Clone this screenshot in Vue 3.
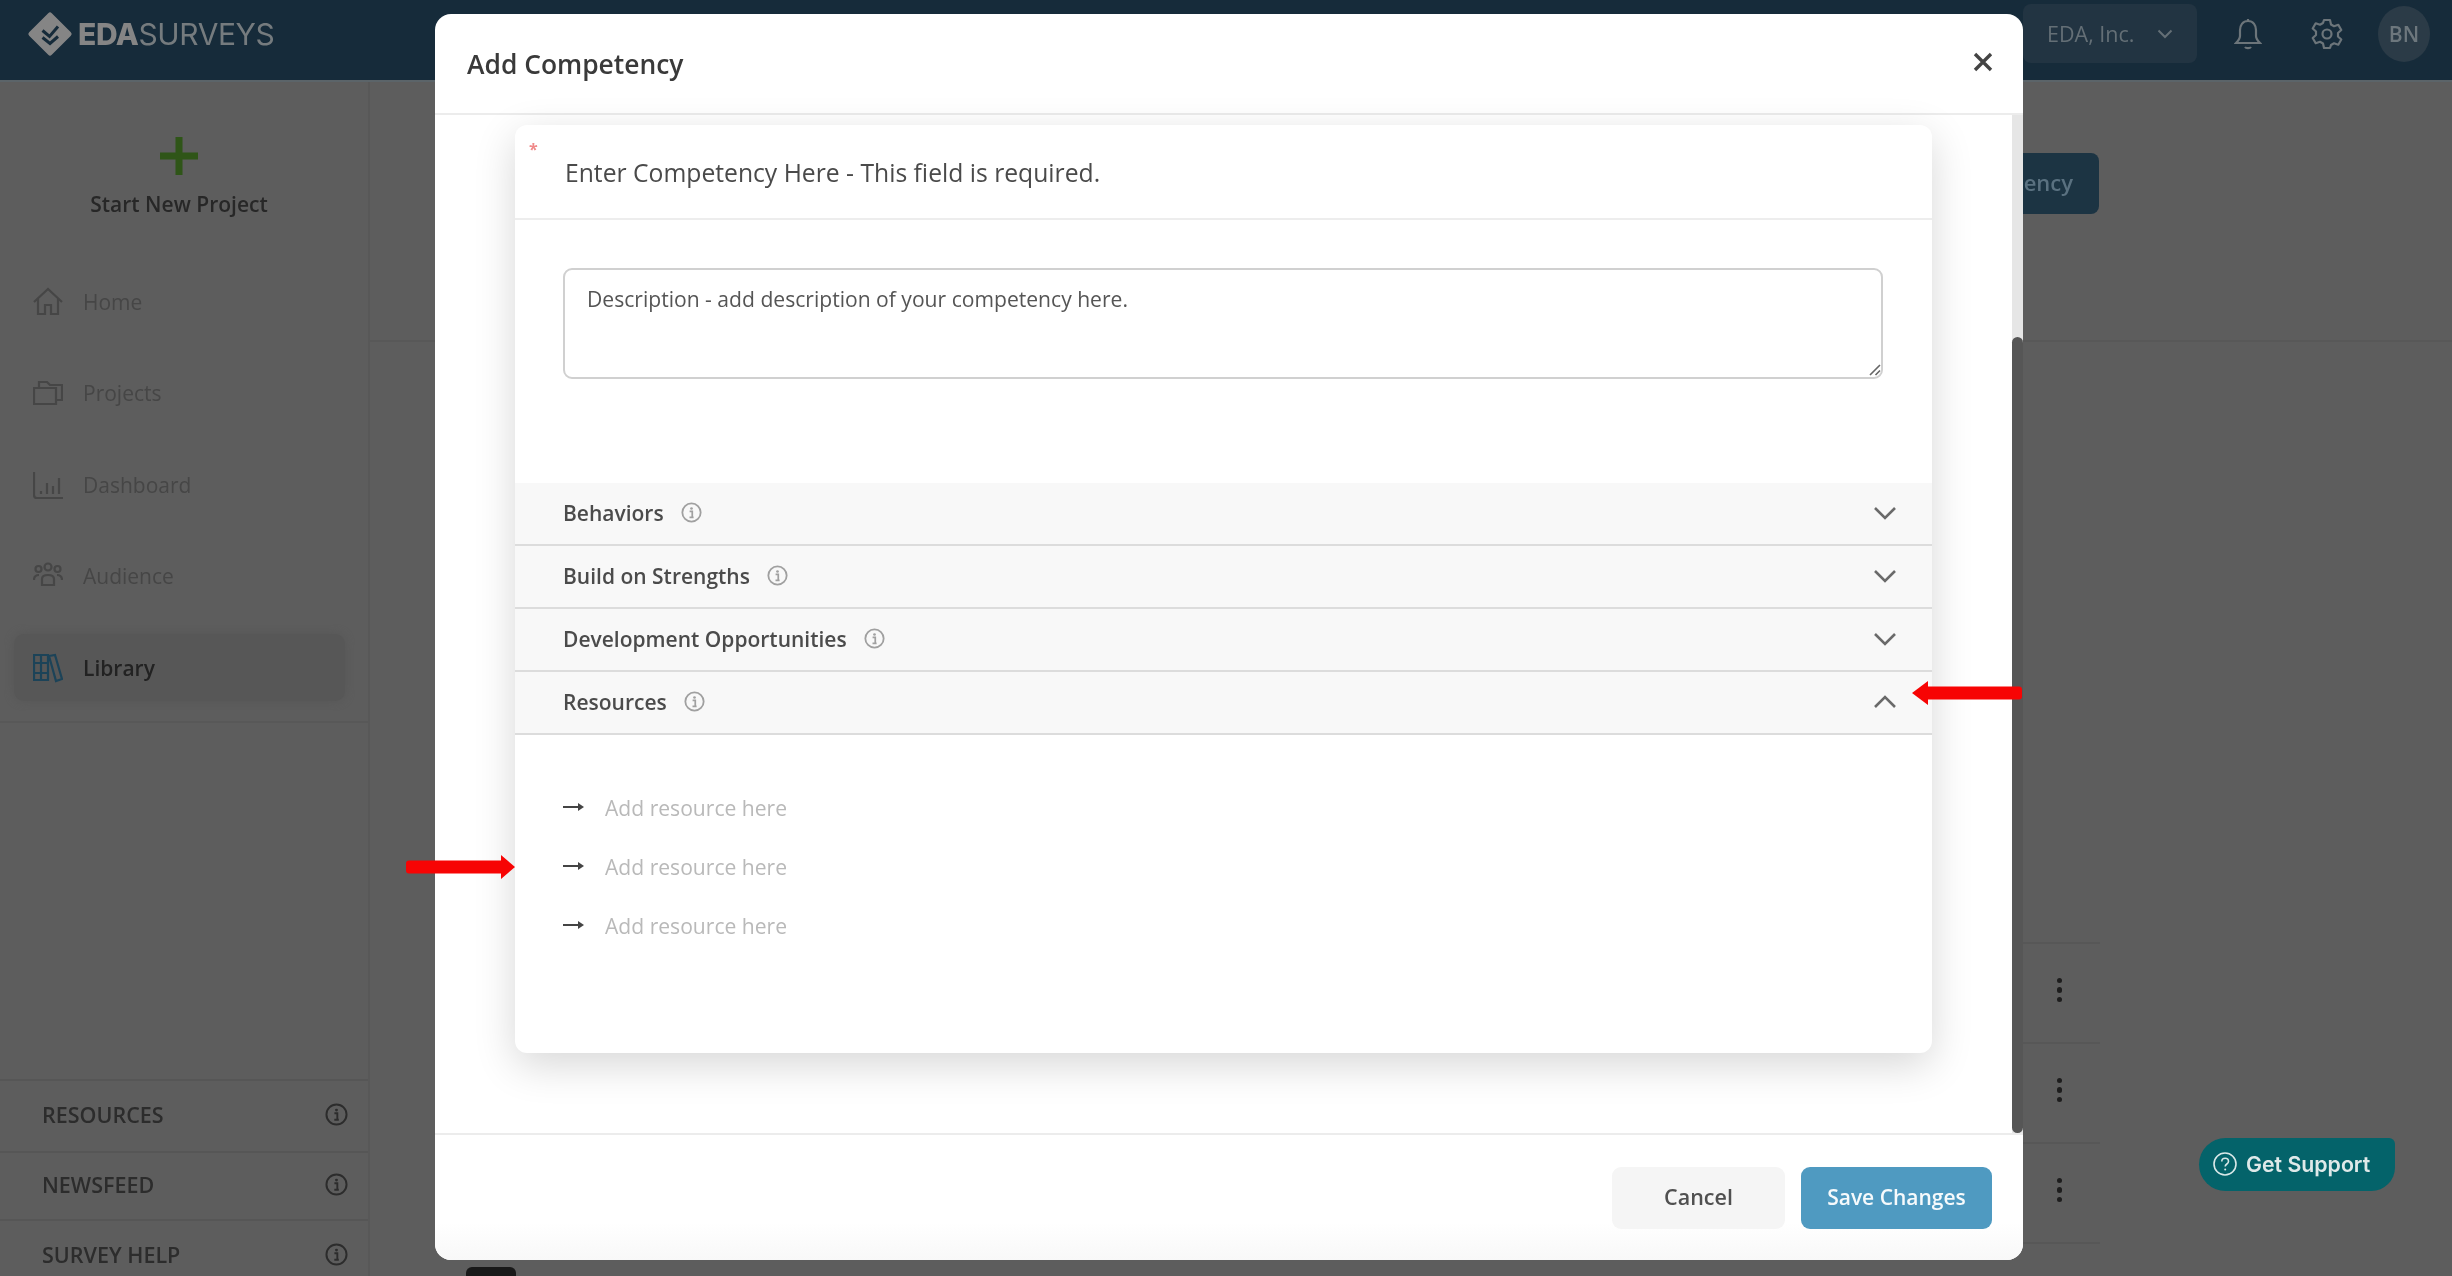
<script setup>
const navItems = [
  { label: 'Home', icon: 'home' },
  { label: 'Projects', icon: 'folder' },
  { label: 'Dashboard', icon: 'chart' },
  { label: 'Audience', icon: 'people' },
  { label: 'Library', icon: 'books', active: true },
]
const helpers = ['RESOURCES', 'NEWSFEED', 'SURVEY HELP']
const sections = [
  { label: 'Behaviors', open: false },
  { label: 'Build on Strengths', open: false },
  { label: 'Development Opportunities', open: false },
  { label: 'Resources', open: true },
]
const resources = [1, 2, 3]
const tableRows = [1, 2, 3]
</script>

<template>
  <div class="screen">
    <svg class="defs" width="0" height="0" aria-hidden="true">
      <symbol id="info" viewBox="0 0 22 22">
        <circle cx="11" cy="11" r="9.6" fill="none" stroke="currentColor" stroke-width="1.9" />
        <circle cx="11" cy="6.8" r="1.4" fill="currentColor" />
        <path d="M9 9.8h2.8v6M8.9 16h4.3" fill="none" stroke="currentColor" stroke-width="1.8" />
      </symbol>
    </svg>

    <header class="topbar">
      <div class="brand">
        <svg class="brand-mark" viewBox="0 0 46 46">
          <rect x="7" y="7" width="32" height="32" rx="2.5" transform="rotate(45 23 23)" fill="#858585" />
          <path d="M15.5 19.5l7 6 8.5-10M15.500 26.500l7.500 6 8-7" fill="none" stroke="#162b3a" stroke-width="3" />
        </svg>
        <span class="brand-name"><b>EDA</b>SURVEYS</span>
      </div>
      <div class="top-tools">
        <div class="org">
          <span>EDA, Inc.</span>
          <svg width="16" height="10" viewBox="0 0 16 10"><path d="M1.5 1.5L8 8l6.5-6.5" fill="none" stroke="#646f76" stroke-width="2" /></svg>
        </div>
        <svg class="tool bell" viewBox="0 0 28 32">
          <path d="M14 3c-5.500 0-8 4.500-8 9v6c0 3-2 5-4 7h24c-2-2-4-4-4-7v-6c0-4.500-2.500-9-8-9zM14 1v2M11 29c1 1.500 5 1.500 6 0" fill="none" stroke="#6c757a" stroke-width="2.200" />
        </svg>
        <svg class="tool gear" viewBox="0 0 32 32">
          <path d="M13 2h6l1 4.500 3 1.700 4.300-1.400 3 5.200-3.300 3 0 3.500 3.300 3-3 5.200-4.300-1.400-3 1.700L19 30h-6l-1-4.500-3-1.700-4.300 1.400-3-5.200 3.300-3 0-3.500-3.300-3 3-5.200 4.300 1.400 3-1.700z" fill="none" stroke="#6c757a" stroke-width="2.200" stroke-linejoin="round" />
          <circle cx="16" cy="16" r="4.500" fill="none" stroke="#6c757a" stroke-width="2.200" />
        </svg>
        <div class="avatar">BN</div>
      </div>
    </header>

    <div class="shell">
      <aside class="sidebar">
        <div class="new-project">
          <svg class="plus" viewBox="0 0 38 38"><path d="M19 0v38M0 19h38" stroke="#2f5518" stroke-width="7" /></svg>
          <span>Start New Project</span>
        </div>
        <nav class="nav">
          <a v-for="item in navItems" :key="item.label" class="nav-item" :class="{ active: item.active }">
            <svg class="nav-icon" viewBox="0 0 30 30">
              <g v-if="item.icon === 'home'" fill="none" stroke="#464646" stroke-width="2.200">
                <path d="M1 15L15 2l14 13M5 12v15h7v-9h6v9h7V12" />
              </g>
              <g v-else-if="item.icon === 'folder'" fill="none" stroke="#464646" stroke-width="2.200">
                <path d="M6 9V4h8l3 3h12v15H24M1 10h22v16H1z" />
              </g>
              <g v-else-if="item.icon === 'chart'" fill="none" stroke="#464646" stroke-width="2.200">
                <path d="M1 2v23c0 2 1 3 3 3h26M8 21v3M14 13v11M20 16v8M26 8v16" />
              </g>
              <g v-else-if="item.icon === 'people'" fill="none" stroke="#464646" stroke-width="2.200">
                <circle cx="5.500" cy="8" r="3" /><circle cx="15" cy="6" r="3.500" /><circle cx="24.500" cy="8" r="3" />
                <path d="M1 19c0-4 2-5 5-5M29 19c0-4-2-5-5-5M9 24v-6c0-3 3-4 6-4s6 1 6 4v6z" />
              </g>
              <g v-else fill="none" stroke="#1c4358" stroke-width="2.200">
                <path d="M1 2h7v25H1zM8 2h7v25H8zM1 10h14M1 20h14M16 3l6-1 7 24-6 2z" />
              </g>
            </svg>
            <span>{{ item.label }}</span>
          </a>
        </nav>
        <div class="helpers">
          <div v-for="name in helpers" :key="name" class="helper">
            <span>{{ name }}</span>
            <svg class="helper-info"><use href="#info" /></svg>
          </div>
        </div>
      </aside>

      <main class="content">
        <div class="content-head">
          <button class="add-btn">Add Competency</button>
        </div>
        <div class="table">
          <div v-for="row in tableRows" :key="row" class="table-row">
            <span class="dots"><i></i><i></i><i></i></span>
          </div>
        </div>
      </main>
    </div>

    <div class="help-chip">
      <svg class="chip-icon" viewBox="0 0 24 24">
        <circle cx="12" cy="12" r="11" fill="none" stroke="#d9e8e8" stroke-width="1.600" />
        <path d="M8.800 9.500c0-4.300 6.700-4.300 6.700 0 0 2.500-3.300 2.500-3.300 5" fill="none" stroke="#d9e8e8" stroke-width="1.600" />
        <circle cx="12.200" cy="17.500" r="1" fill="#d9e8e8" />
      </svg>
      <span>Get Support</span>
    </div>

    <div class="stub"></div>

    <section class="modal">
      <div class="modal-head">
        <h2>Add Competency</h2>
        <svg class="close" viewBox="0 0 20 20"><path d="M2 2l16 16M18 2L2 18" stroke="#444" stroke-width="3.400" /></svg>
      </div>
      <div class="modal-body">
        <div class="card">
          <div class="title-row">
            <span class="star">*</span>
            <span>Enter Competency Here - This field is required.</span>
          </div>
          <div class="desc">
            <textarea placeholder="Description - add description of your competency here."></textarea>
            <svg class="grip" viewBox="0 0 12 12"><path d="M1 11L11 1M6.500 11L11 6.500" stroke="#666" stroke-width="1.600" /></svg>
          </div>
          <div class="accordion">
            <div v-for="s in sections" :key="s.label" class="acc-row">
              <span class="acc-label">{{ s.label }}</span>
              <svg class="acc-info"><use href="#info" /></svg>
              <svg class="chev" :class="{ up: s.open }" viewBox="0 0 24 14"><path d="M2 2l10 10L22 2" fill="none" stroke="#6a6a6a" stroke-width="2.600" /></svg>
            </div>
          </div>
          <ul class="res-list">
            <li v-for="r in resources" :key="r">
              <svg class="res-arrow" viewBox="0 0 21 10"><path d="M0 5h17" stroke="#444" stroke-width="2" /><path d="M15 1l6 4-6 4z" fill="#444" /></svg>
              <span>Add resource here</span>
            </li>
          </ul>
        </div>
      </div>
      <div class="modal-foot">
        <button class="btn cancel">Cancel</button>
        <button class="btn save">Save Changes</button>
      </div>
      <div class="track"><div class="thumb"></div></div>
    </section>

    <svg class="mark mark-left" viewBox="0 0 109 24"><path d="M3 5.500h92V0l14 12-14 12v-5.500H3a3 3 0 0 1-3-3v-7a3 3 0 0 1 3-3z" fill="#f70404" /></svg>
    <svg class="mark mark-right" viewBox="0 0 110 24"><path d="M107 5.500H16V0L0 12l16 12v-5.500h91a3 3 0 0 0 3-3v-7a3 3 0 0 0-3-3z" fill="#f70404" /></svg>
  </div>
</template>

<style scoped>
.screen {
  position: relative;
  width: 2452px;
  height: 1276px;
  overflow: hidden;
  background: #5d5d5d;
  font-family: "Open Sans", "Noto Sans", sans-serif;
  filter: blur(0.7px);
}
.defs { position: absolute; }

.topbar {
  height: 82px;
  box-sizing: border-box;
  background: #162b3a;
  border-bottom: 2px solid #5b6469;
  display: flex;
  align-items: flex-start;
  justify-content: space-between;
}
.brand { display: flex; align-items: center; padding: 11px 0 0 27px; gap: 5px; }
.brand-mark { width: 46px; height: 46px; }
.brand-name {
  font-family: Inter, sans-serif;
  font-size: 30px;
  letter-spacing: -0.4px;
  color: #757b7e;
  font-weight: 400;
}
.brand-name b { color: #858585; font-weight: 800; }

.top-tools { display: flex; align-items: center; padding-top: 4px; }
.org {
  width: 174px;
  height: 59px;
  box-sizing: border-box;
  background: #223442;
  border-radius: 8px;
  display: flex;
  align-items: center;
  padding-left: 24px;
  gap: 23px;
  color: #646f76;
  font-size: 21.500px;
  margin-right: 37px;
}
.tool { display: block; }
.bell { width: 28px; height: 32px; margin-right: 49px; }
.gear { width: 32px; height: 32px; margin-right: 35px; }
.avatar {
  width: 52px;
  height: 56px;
  border-radius: 50%;
  background: #2b3b47;
  color: #6d777d;
  font-size: 21px;
  font-weight: 600;
  display: flex;
  align-items: center;
  justify-content: center;
  margin-right: 22px;
}

.shell { display: flex; height: 1194px; }
.sidebar {
  width: 370px;
  flex: none;
  box-sizing: border-box;
  border-right: 2px solid #585858;
  display: flex;
  flex-direction: column;
}
.new-project {
  display: flex;
  flex-direction: column;
  align-items: center;
  padding: 55px 10px 0 0;
  font-size: 21px;
  font-weight: 600;
  line-height: 30px;
  color: #272727;
}
.plus { width: 38px; height: 38px; margin-bottom: 14px; }
.nav {
  margin-top: 49px;
  padding-bottom: 20px;
  border-bottom: 2px solid #585858;
  display: flex;
  flex-direction: column;
  gap: 24.500px;
}
.nav-item {
  height: 67px;
  margin-left: 14px;
  width: 331px;
  padding-left: 19px;
  box-sizing: border-box;
  display: flex;
  align-items: center;
  gap: 20px;
  border-radius: 10px;
  font-size: 21px;
  color: #464646;
}
.nav-item.active {
  background: #575757;
  box-shadow: 0 0 8px #575757;
  color: #222;
  font-weight: 600;
}
.nav-icon { width: 30px; height: 30px; flex: none; }
.helpers { margin-top: auto; }
.helper {
  height: 68px;
  box-sizing: border-box;
  border-top: 2px solid #565656;
  display: flex;
  align-items: center;
  justify-content: space-between;
  padding: 0 20px 3px 42px;
  font-size: 21.500px;
  font-weight: 600;
  color: #2c2c2c;
}
.helper:first-child { height: 72px; }
.helper:last-child { height: 57px; padding-top: 11px; padding-bottom: 0; }
.helper-info { width: 23px; height: 23px; color: #2c2c2c; }

.content { flex: 1; }
.content-head {
  height: 260px;
  box-sizing: border-box;
  padding: 71px 353px 0 0;
  border-bottom: 2px solid #585858;
  display: flex;
  justify-content: flex-end;
  align-items: flex-start;
}
.add-btn {
  height: 61px;
  padding: 0 26px 4px;
  border: 0;
  border-radius: 8px;
  background: #1c3443;
  color: #5a7180;
  font-family: inherit;
  font-size: 22px;
  font-weight: 600;
}
.table {
  margin: 600px 0 0 1600px;
  width: 130px;
  border-bottom: 2px solid #575757;
}
.table-row {
  height: 100px;
  box-sizing: border-box;
  border-top: 2px solid #575757;
  display: flex;
  align-items: center;
  justify-content: flex-end;
  padding: 0 38px 6px 0;
}
.dots { display: flex; flex-direction: column; gap: 4px; }
.dots i { width: 5.500px; height: 5.500px; border-radius: 50%; background: #1d1d1d; display: block; }

.help-chip {
  position: absolute;
  left: 2199px;
  top: 1138px;
  width: 196px;
  height: 53px;
  box-sizing: border-box;
  padding: 0 0 2px 14px;
  background: #04636a;
  border-radius: 27px 6px 24px 27px;
  display: flex;
  align-items: center;
  gap: 9px;
  font-family: Inter, sans-serif;
  font-size: 21.300px;
  font-weight: 600;
  color: #dfe9e9;
}
.chip-icon { width: 24px; height: 24px; }

.stub {
  position: absolute;
  left: 466px;
  top: 1267px;
  width: 50px;
  height: 12px;
  border-radius: 6px 6px 0 0;
  background: #191919;
}

.modal {
  position: absolute;
  left: 435px;
  top: 14px;
  width: 1588px;
  height: 1246px;
  background: #fff;
  border-radius: 16px;
  overflow: hidden;
  display: flex;
  flex-direction: column;
  color: #3d3d3d;
}
.modal-head {
  height: 101px;
  flex: none;
  box-sizing: border-box;
  border-bottom: 2px solid #ececec;
  display: flex;
  align-items: center;
  justify-content: space-between;
  padding: 0 30px 0 32px;
}
.modal-head h2 {
  margin: 0;
  font-size: 26.400px;
  font-weight: 600;
  color: #3a3a3a;
}
.close { width: 20px; height: 20px; margin-bottom: 3px; }
.modal-body { flex: 1; min-height: 0; padding: 10px 0 0 80px; }
.card {
  width: 1417px;
  height: 928px;
  border-radius: 12px;
  background: #fff;
  box-shadow: 0 12px 42px rgba(0, 0, 0, 0.16);
  display: flex;
  flex-direction: column;
}
.title-row {
  position: relative;
  height: 95px;
  flex: none;
  box-sizing: border-box;
  padding: 1px 0 0 50px;
  border-bottom: 2px solid #ededed;
  display: flex;
  align-items: center;
  font-size: 24.700px;
  color: #4a4a4a;
}
.star {
  position: absolute;
  left: 14px;
  top: 13px;
  font-size: 16px;
  font-weight: 700;
  color: #f08a8a;
}
.desc { position: relative; padding: 48px 0 104px 48px; }
textarea {
  display: block;
  width: 1320px;
  height: 111px;
  box-sizing: border-box;
  padding: 14px 22px;
  border: 2px solid #d0d0d0;
  border-radius: 9px;
  outline: none;
  resize: none;
  font-family: inherit;
  font-size: 21.100px;
  line-height: 30px;
}
textarea::placeholder { color: #555; opacity: 1; }
.grip {
  position: absolute;
  left: 1354px;
  top: 144px;
  width: 12px;
  height: 12px;
}
.acc-row {
  height: 63px;
  box-sizing: border-box;
  background: #f8f8f8;
  border-bottom: 2px solid #dcdcdc;
  padding: 0 0 2px 48px;
  display: flex;
  align-items: center;
  gap: 17px;
}
.acc-label { font-size: 21px; font-weight: 600; color: #4b4b4b; }
.acc-info { width: 21px; height: 21px; color: #a0a0a0; }
.chev { width: 24px; height: 14px; margin-left: auto; margin-right: 35px; }
.chev.up { transform: rotate(180deg); }
.res-list {
  list-style: none;
  margin: 0;
  padding: 57px 0 0 48px;
  display: flex;
  flex-direction: column;
  gap: 29px;
}
.res-list li {
  height: 30px;
  display: flex;
  align-items: center;
  gap: 21px;
  font-size: 21.100px;
  color: #b9b9b9;
}
.res-arrow { width: 21px; height: 10px; }
.modal-foot {
  height: 127px;
  flex: none;
  box-sizing: border-box;
  border-top: 2px solid #ececec;
  background: linear-gradient(#fff 70%, #f8f8f8);
  padding: 32px 31px 0 0;
  display: flex;
  justify-content: flex-end;
  align-items: flex-start;
  gap: 16px;
}
.btn {
  height: 62px;
  padding: 0 0 3px;
  border: 0;
  border-radius: 9px;
  font-family: inherit;
  font-size: 21.500px;
  font-weight: 600;
}
.cancel { width: 173px; background: #f5f5f5; color: #505050; }
.save { width: 191px; background: #4f9ac1; color: #f6fafc; font-size: 21px; }
.track {
  position: absolute;
  right: 0;
  top: 101px;
  bottom: 127px;
  width: 11px;
  background: #e6e6e6;
}
.thumb {
  position: absolute;
  left: 0;
  right: 0;
  top: 222px;
  bottom: 0;
  border-radius: 6px;
  background: #565656;
}

.mark { position: absolute; height: 24px; }
.mark-left { left: 406px; top: 855px; width: 109px; }
.mark-right { left: 1912px; top: 681px; width: 110px; }
</style>

<style>
html, body { margin: 0; overflow: hidden; }
</style>
